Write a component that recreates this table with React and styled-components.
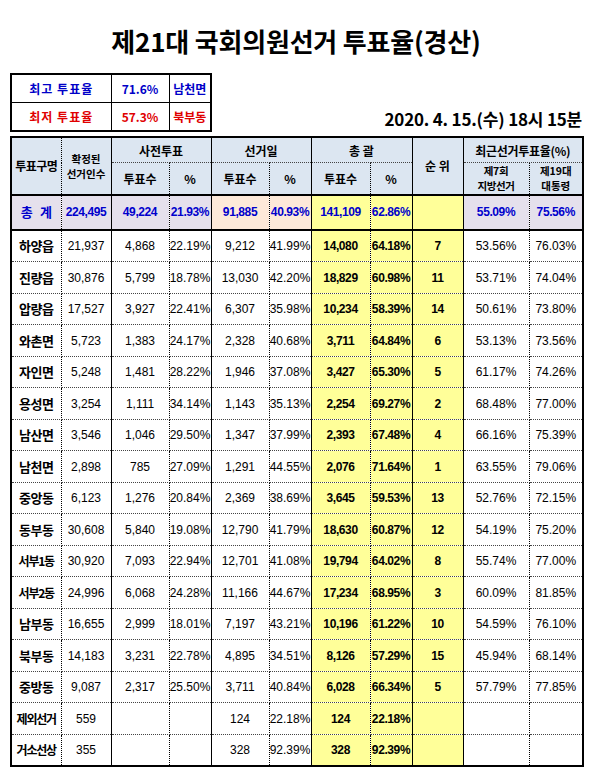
import React from 'react'
import styled, { createGlobalStyle } from 'styled-components'

const Global = createGlobalStyle`
  body {
    margin: 0;
    background: #ffffff;
    font-family: "Liberation Sans", "Noto Sans CJK KR", sans-serif;
    color: #000;
  }
`

const Page = styled.div`
  width: 591px;
  padding: 0 9px 0 10px;
  box-sizing: border-box;
`

const Title = styled.h1`
  margin: 0;
  padding-top: 25px;
  height: 47px;
  box-sizing: border-box;
  text-align: center;
  font-family: "Noto Sans CJK KR", sans-serif;
  font-size: 26px;
  font-weight: 700;
  line-height: 32px;
  letter-spacing: -0.2px;
`

const InfoRow = styled.div`
  margin-top: 26px;
  display: flex;
  justify-content: space-between;
  align-items: flex-end;
`

const InfoBox = styled.table`
  border-collapse: collapse;
  border: 2px solid #000;
  table-layout: fixed;
  width: 202px;
`

const InfoCell = styled.td`
  height: 27px;
  padding: 0;
  border: 1px solid #000;
  text-align: center;
  font-family: "Noto Sans CJK KR", sans-serif;
  font-size: 12px;
  font-weight: 700;
  color: ${(p) => (p.$low ? '#e00000' : '#0000c8')};
  letter-spacing: ${(p) => p.$spread || 0};
`

const DateText = styled.div`
  font-family: "Noto Sans CJK KR", sans-serif;
  font-size: 17px;
  font-weight: 700;
  padding-bottom: 1px;
  letter-spacing: -0.2px;
`

const Grid = styled.table`
  margin-top: 4px;
  border-collapse: collapse;
  table-layout: fixed;
  width: 572px;
  border: 2px solid #000;
`

const HeadCell = styled.th`
  padding: 0;
  height: ${(p) => p.$h || 24}px;
  background: #dce6f1;
  font-family: "Noto Sans CJK KR", sans-serif;
  font-size: ${(p) => (p.$two ? 10.5 : 12)}px;
  font-weight: 700;
  line-height: ${(p) => (p.$two ? 15.4 : 17)}px;
  text-align: center;
  white-space: nowrap;
  border-right: 1px ${(p) => p.$r || 'solid'} #000;
  border-bottom: ${(p) => (p.$bottom ? '2px solid #000' : '1px dotted #444')};
  letter-spacing: ${(p) => p.$ls || 0};
`

const Cell = styled.td`
  padding: 0;
  height: ${(p) => (p.$total ? 33 : 30.5)}px;
  text-align: center;
  white-space: nowrap;
  overflow: hidden;
  background: ${(p) => p.$bg || '#ffffff'};
  border-right: 1px ${(p) => p.$r || 'solid'} #000;
  border-bottom: ${(p) => (p.$total ? '2px solid #000' : '1px dotted #444')};
  font-family: ${(p) =>
    p.$name ? '"Noto Sans CJK KR", sans-serif' : '"Liberation Sans", "Noto Sans CJK KR", sans-serif'};
  font-size: ${(p) => (p.$name ? (p.$long ? 12 : 13) : 12)}px;
  line-height: 16px;
  font-weight: ${(p) => (p.$bold ? 700 : 400)};
  color: ${(p) => (p.$total ? '#0000cc' : '#000')};
  letter-spacing: ${(p) => (p.$long ? '-1.2px' : p.$bold ? '-0.4px' : '0')};
`

const widths = [50, 50, 58, 42, 58, 42, 59, 42, 51, 66, 54]
const seps = ['dotted', 'solid', 'dotted', 'solid', 'dotted', 'solid', 'dotted', 'solid', 'solid', 'dotted', 'solid']

const YELLOW = '#ffff99'
const LAVENDER = '#e5e0ec'
const PEACH = '#fde9d9'

const total = ['총\u00a0\u00a0\u00a0계', '224,495', '49,224', '21.93%', '91,885', '40.93%', '141,109', '62.86%', '', '55.09%', '75.56%']
const totalBg = [LAVENDER, LAVENDER, LAVENDER, LAVENDER, PEACH, PEACH, YELLOW, YELLOW, YELLOW, LAVENDER, LAVENDER]

const rows = [
  ['하양읍', '21,937', '4,868', '22.19%', '9,212', '41.99%', '14,080', '64.18%', '7', '53.56%', '76.03%'],
  ['진량읍', '30,876', '5,799', '18.78%', '13,030', '42.20%', '18,829', '60.98%', '11', '53.71%', '74.04%'],
  ['압량읍', '17,527', '3,927', '22.41%', '6,307', '35.98%', '10,234', '58.39%', '14', '50.61%', '73.80%'],
  ['와촌면', '5,723', '1,383', '24.17%', '2,328', '40.68%', '3,711', '64.84%', '6', '53.13%', '73.56%'],
  ['자인면', '5,248', '1,481', '28.22%', '1,946', '37.08%', '3,427', '65.30%', '5', '61.17%', '74.26%'],
  ['용성면', '3,254', '1,111', '34.14%', '1,143', '35.13%', '2,254', '69.27%', '2', '68.48%', '77.00%'],
  ['남산면', '3,546', '1,046', '29.50%', '1,347', '37.99%', '2,393', '67.48%', '4', '66.16%', '75.39%'],
  ['남천면', '2,898', '785', '27.09%', '1,291', '44.55%', '2,076', '71.64%', '1', '63.55%', '79.06%'],
  ['중앙동', '6,123', '1,276', '20.84%', '2,369', '38.69%', '3,645', '59.53%', '13', '52.76%', '72.15%'],
  ['동부동', '30,608', '5,840', '19.08%', '12,790', '41.79%', '18,630', '60.87%', '12', '54.19%', '75.20%'],
  ['서부1동', '30,920', '7,093', '22.94%', '12,701', '41.08%', '19,794', '64.02%', '8', '55.74%', '77.00%'],
  ['서부2동', '24,996', '6,068', '24.28%', '11,166', '44.67%', '17,234', '68.95%', '3', '60.09%', '81.85%'],
  ['남부동', '16,655', '2,999', '18.01%', '7,197', '43.21%', '10,196', '61.22%', '10', '54.59%', '76.10%'],
  ['북부동', '14,183', '3,231', '22.78%', '4,895', '34.51%', '8,126', '57.29%', '15', '45.94%', '68.14%'],
  ['중방동', '9,087', '2,317', '25.50%', '3,711', '40.84%', '6,028', '66.34%', '5', '57.79%', '77.85%'],
  ['제외선거', '559', '', '', '124', '22.18%', '124', '22.18%', '', '', ''],
  ['거소선상', '355', '', '', '328', '92.39%', '328', '92.39%', '', '', ''],
]

const boldCols = [0, 6, 7, 8]

function App() {
  return (
    <Page>
      <Global />
      <Title>제21대 국회의원선거 투표율(경산)</Title>

      <InfoRow>
        <InfoBox>
          <colgroup>
            <col style={{ width: 100 }} />
            <col style={{ width: 58 }} />
            <col style={{ width: 42 }} />
          </colgroup>
          <tbody>
            <tr>
              <InfoCell $spread="1px">최고 투표율</InfoCell>
              <InfoCell>71.6%</InfoCell>
              <InfoCell>남천면</InfoCell>
            </tr>
            <tr>
              <InfoCell $low $spread="1px">최저 투표율</InfoCell>
              <InfoCell $low>57.3%</InfoCell>
              <InfoCell $low>북부동</InfoCell>
            </tr>
          </tbody>
        </InfoBox>
        <DateText>2020. 4. 15.(수) 18시 15분</DateText>
      </InfoRow>

      <Grid>
        <colgroup>
          {widths.map((w, i) => (
            <col key={i} style={{ width: w }} />
          ))}
        </colgroup>
        <thead>
          <tr>
            <HeadCell rowSpan={2} $r="dotted" $bottom $ls="-0.5px">투표구명</HeadCell>
            <HeadCell rowSpan={2} $bottom $two>확정된<br />선거인수</HeadCell>
            <HeadCell colSpan={2}>사전투표</HeadCell>
            <HeadCell colSpan={2}>선거일</HeadCell>
            <HeadCell colSpan={2}>총 괄</HeadCell>
            <HeadCell rowSpan={2} $bottom>순 위</HeadCell>
            <HeadCell colSpan={2} $ls="-0.3px">최근선거투표율(%)</HeadCell>
          </tr>
          <tr>
            <HeadCell $r="dotted" $bottom $h={30}>투표수</HeadCell>
            <HeadCell $bottom>%</HeadCell>
            <HeadCell $r="dotted" $bottom>투표수</HeadCell>
            <HeadCell $bottom>%</HeadCell>
            <HeadCell $r="dotted" $bottom>투표수</HeadCell>
            <HeadCell $bottom>%</HeadCell>
            <HeadCell $r="dotted" $bottom $two $ls="-0.4px">제7회<br />지방선거</HeadCell>
            <HeadCell $bottom $two>제19대<br />대통령</HeadCell>
          </tr>
        </thead>
        <tbody>
          <tr>
            {total.map((v, i) => (
              <Cell key={i} $total $bold $name={i === 0} $r={seps[i]} $bg={totalBg[i]}>
                {v}
              </Cell>
            ))}
          </tr>
          {rows.map((row) => (
            <tr key={row[0]}>
              {row.map((v, i) => (
                <Cell
                  key={i}
                  $r={seps[i]}
                  $name={i === 0}
                  $long={i === 0 && v.length > 3}
                  $bold={boldCols.includes(i)}
                  $bg={i >= 6 && i <= 8 ? YELLOW : undefined}
                >
                  {v}
                </Cell>
              ))}
            </tr>
          ))}
        </tbody>
      </Grid>
    </Page>
  )
}

export default App
